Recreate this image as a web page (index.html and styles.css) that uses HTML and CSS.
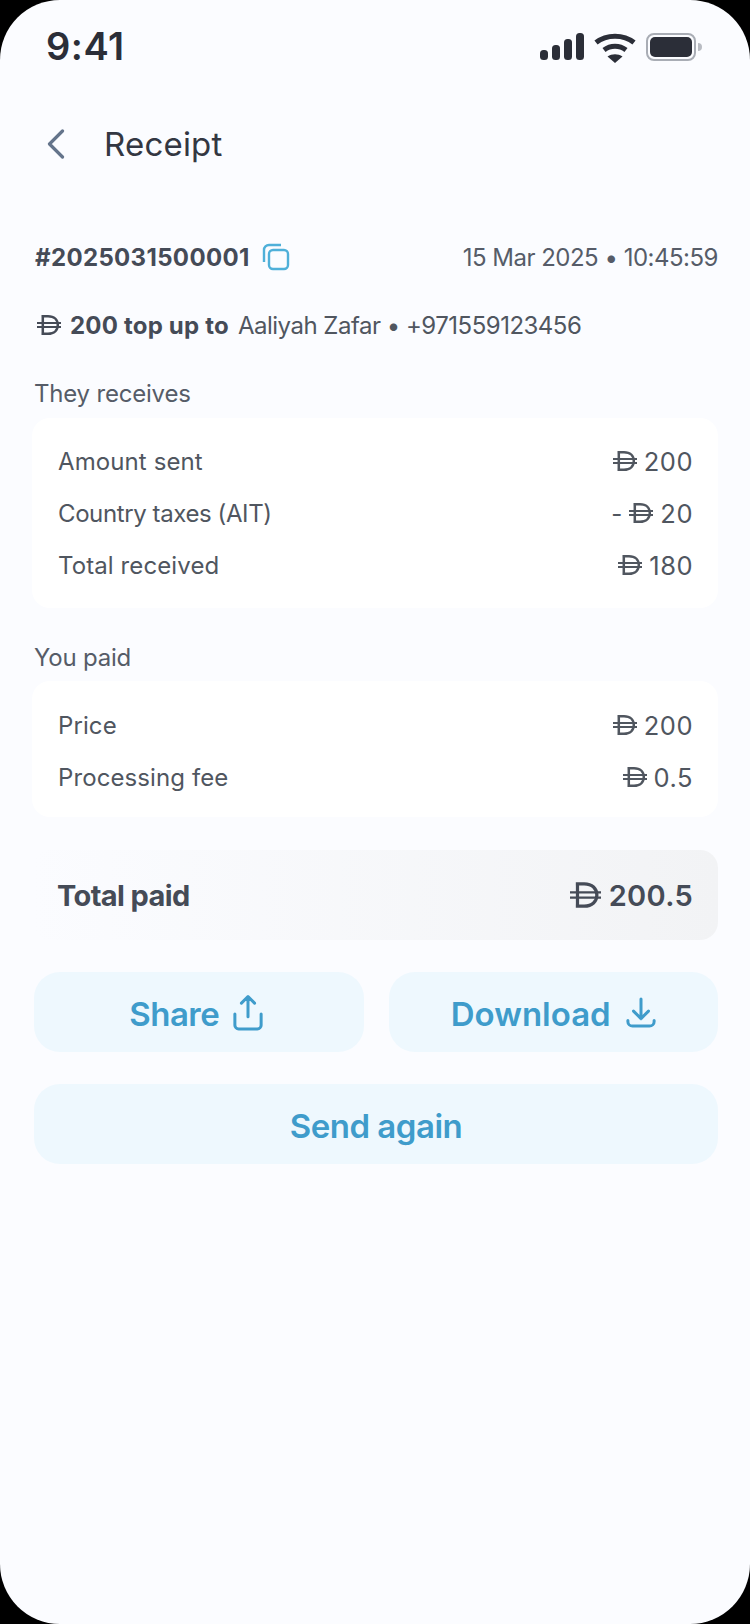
FILE: index.html
```html
<!DOCTYPE html>
<html lang="en">
<head>
<meta charset="utf-8">
<title>Receipt</title>
<link rel="stylesheet" href="styles.css">
</head>
<body>
<svg class="defs" width="0" height="0" aria-hidden="true">
  <symbol id="dh" viewBox="0 0 24 20">
    <path d="M4.500 1.300h6.500c6.200 0 9.800 3.700 9.800 8.700s-3.600 8.700-9.800 8.700H4.500M5.800 1.300v17.400" fill="none" stroke="currentColor" stroke-width="2.500"/>
    <path d="M0 8h24M0 12h24" fill="none" stroke="currentColor" stroke-width="1.800"/>
  </symbol>
</svg>
<main class="screen">
  <header class="status">
    <span class="time">9:41</span>
    <div class="status-icons">
      <svg class="signal" width="44" height="27" viewBox="0 0 44 27"><rect x="0" y="17" width="8" height="10" rx="3.500"/><rect x="12" y="12" width="8" height="15" rx="3.500"/><rect x="24" y="6" width="8" height="21" rx="3.500"/><rect x="36" y="0" width="8" height="27" rx="3.500"/></svg>
      <svg class="wifi" width="42" height="30" viewBox="0 0 42 30"><path d="M2 9.500C12.500 1 29.500 1 40 9.500" fill="none" stroke-width="5"/><path d="M10 17c6.500-5 15.500-5 22 0" fill="none" stroke-width="5"/><path d="M13.500 23.500c4.500-3 10.500-3 15 0L21 30z" stroke="none"/></svg>
      <div class="battery"><span class="battery-fill"></span></div>
      <span class="battery-cap"></span>
    </div>
  </header>

  <nav class="nav">
    <svg class="back" width="20" height="30" viewBox="0 0 20 30"><path d="M16.500 2 3.500 15l13 13" fill="none" stroke="#64748b" stroke-width="3.200" stroke-linecap="round" stroke-linejoin="round"/></svg>
    <h1 class="title">Receipt</h1>
  </nav>

  <section class="content">
    <div class="meta">
      <div class="ref">
        <span class="ref-no">#2025031500001</span>
        <svg class="copy" width="28" height="28" viewBox="0 0 28 28" fill="none" stroke="#4fb0d9" stroke-width="2.400"><rect x="7" y="7" width="19" height="19" rx="4"/><path d="M19 2H7a5 5 0 0 0-5 5v12"/></svg>
      </div>
      <span class="date">15 Mar 2025 • 10:45:59</span>
    </div>

    <p class="topup">
      <svg class="dh dh-sm"><use href="#dh"/></svg>
      <b>200 top up to</b>
      <span>Aaliyah Zafar • +971559123456</span>
    </p>

    <h2 class="label">They receives</h2>
    <div class="card card-a">
      <div class="row"><span>Amount sent</span><span class="amt"><svg class="dh"><use href="#dh"/></svg><span class="num">200</span></span></div>
      <div class="row"><span class="tight">Country taxes (AIT)</span><span class="amt">-&nbsp;<svg class="dh"><use href="#dh"/></svg><span class="num">20</span></span></div>
      <div class="row"><span>Total received</span><span class="amt"><svg class="dh"><use href="#dh"/></svg><span class="num">180</span></span></div>
    </div>

    <h2 class="label label-b">You paid</h2>
    <div class="card card-b">
      <div class="row"><span>Price</span><span class="amt"><svg class="dh"><use href="#dh"/></svg><span class="num">200</span></span></div>
      <div class="row"><span>Processing fee</span><span class="amt"><svg class="dh"><use href="#dh"/></svg><span class="num">0.5</span></span></div>
    </div>

    <div class="total">
      <span>Total paid</span>
      <span class="amt"><svg class="dh dh-lg"><use href="#dh"/></svg>200.5</span>
    </div>

    <div class="actions">
      <button class="btn btn-share">Share
        <svg width="30" height="37" viewBox="0 0 32 39" fill="none" stroke="#3f9ccb" stroke-width="3.200" stroke-linecap="round" stroke-linejoin="round"><path d="M16 24V3M9 9.500 16 2.500l7 7M2 21v12a4 4 0 0 0 4 4h20a4 4 0 0 0 4-4V21"/></svg>
      </button>
      <button class="btn btn-download">Download
        <svg width="30" height="31" viewBox="0 0 32 33" fill="none" stroke="#3f9ccb" stroke-width="3.200" stroke-linecap="round" stroke-linejoin="round"><path d="M16 2v21M8 15l8 8 8-8M2 25v1a5 5 0 0 0 5 5h18a5 5 0 0 0 5-5v-1"/></svg>
      </button>
      <button class="btn btn-wide">Send again</button>
    </div>
  </section>
</main>
</body>
</html>
```
FILE: styles.css
```css
* { box-sizing: border-box; margin: 0; padding: 0; }
html, body { height: 100%; }
body { background: #000; font-family: "Inter", "Liberation Sans", sans-serif; color: #454b57; overflow: hidden; }
.defs { position: absolute; }
.screen { height: 1624px; width: 750px; background: #fbfcff; border-radius: 60px; display: flex; flex-direction: column; }

.status { height: 92px; padding: 24px 48px 0 46px; display: flex; justify-content: space-between; align-items: flex-start; }
.time { font-size: 38px; line-height: 44px; font-weight: 600; color: #2b2e38; letter-spacing: 0.5px; }
.status-icons { display: flex; align-items: flex-start; padding-top: 9px; fill: #2b2e38; stroke: #2b2e38; }
.signal { stroke: none; margin-right: 10px; }
.wifi { margin-right: 10px; }
.battery { width: 50px; height: 28px; border: 2px solid #a9adb5; border-radius: 8px; padding: 2px; }
.battery-fill { display: block; height: 100%; background: #2b2e38; border-radius: 5px; }
.battery-cap { width: 4px; height: 8px; background: #b9bcc3; border-radius: 0 4px 4px 0; margin: 10px 0 0 2px; }

.nav { height: 60px; padding: 0 0 0 46px; display: flex; align-items: center; gap: 38px; margin-top: 22px; }
.title { font-size: 33px; font-weight: 400; color: #333742; letter-spacing: 0.2px; line-height: 40px; }

.content { padding: 0 32px 0 34px; display: flex; flex-direction: column; }
.meta { margin-top: 66px; height: 34px; padding-left: 1px; display: flex; justify-content: space-between; align-items: center; }
.ref { display: flex; align-items: center; gap: 12px; }
.ref-no { font-size: 24px; font-weight: 700; letter-spacing: 0.35px; color: #454b57; }
.date { font-size: 24px; letter-spacing: -0.5px; color: #565c68; }

.topup { margin-top: 33px; height: 36px; padding-left: 3px; display: flex; align-items: center; font-size: 24px; gap: 9px; letter-spacing: -0.5px; }
.topup b { font-weight: 700; letter-spacing: 0.2px; }
.topup span { color: #50565f; }

.label { margin-top: 34px; font-size: 24px; font-weight: 400; line-height: 34px; letter-spacing: -0.2px; color: #565c68; }
.label-b { margin-top: 33px; }
.card { margin-top: 7px; margin-left: -2px; background: #fff; border-radius: 18px; padding: 17px 25px 16px 26px; display: flex; flex-direction: column; }
.card-a { height: 190px; }
.card-b { height: 136px; margin-top: 6px; padding-top: 18px; }
.row { height: 52px; display: flex; justify-content: space-between; align-items: center; font-size: 24px; letter-spacing: 0.1px; color: #50565f; flex: none; }
.tight { letter-spacing: -0.4px; }
.amt { display: inline-flex; align-items: center; }
.num { font-size: 25.500px; letter-spacing: 0.5px; }
.dh { width: 24px; height: 20px; margin-right: 7px; flex: none; }
.dh-sm { margin-right: 0; }
.dh-lg { width: 31px; height: 26px; margin-right: 8px; }

.total { margin-top: 33px; margin-left: -2px; height: 90px; padding: 0 25px 0 25px; border-radius: 18px; background: linear-gradient(90deg, #fbfcff 0%, #f2f3f5 100%); display: flex; justify-content: space-between; align-items: center; font-size: 29px; font-weight: 700; letter-spacing: -0.6px; color: #454b57; }
.total .amt { font-weight: 600; letter-spacing: 0.3px; }

.actions { margin-top: 32px; display: grid; grid-template-columns: 1fr 1fr; gap: 32px 25px; }
.btn { height: 80px; padding-top: 4px; border: 0; border-radius: 26px; background: #eef8fe; color: #3f9ccb; font: 600 33px/1 "Inter", "Liberation Sans", sans-serif; letter-spacing: -0.5px; display: flex; align-items: center; justify-content: center; gap: 14px; }
.btn svg { margin-top: -4px; }
.btn-share { padding-right: 5px; }
.btn-download { letter-spacing: 0; gap: 15px; }
.btn-wide { grid-column: 1 / -1; }
```
